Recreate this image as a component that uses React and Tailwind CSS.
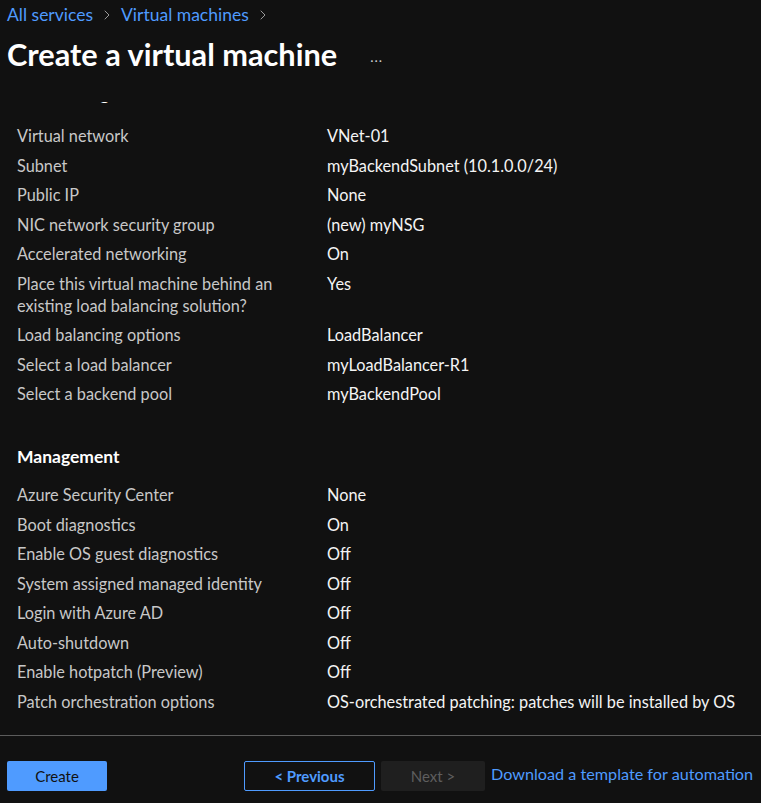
import { ChevronRight } from 'lucide-react';

const networking = [
  ['Virtual network', 'VNet-01'],
  ['Subnet', 'myBackendSubnet (10.1.0.0/24)'],
  ['Public IP', 'None'],
  ['NIC network security group', '(new) myNSG'],
  ['Accelerated networking', 'On'],
  ['Place this virtual machine behind an existing load balancing solution?', 'Yes'],
  ['Load balancing options', 'LoadBalancer'],
  ['Select a load balancer', 'myLoadBalancer-R1'],
  ['Select a backend pool', 'myBackendPool'],
];

const management = [
  ['Azure Security Center', 'None'],
  ['Boot diagnostics', 'On'],
  ['Enable OS guest diagnostics', 'Off'],
  ['System assigned managed identity', 'Off'],
  ['Login with Azure AD', 'Off'],
  ['Auto-shutdown', 'Off'],
  ['Enable hotpatch (Preview)', 'Off'],
  ['Patch orchestration options', 'OS-orchestrated patching: patches will be installed by OS'],
];

function SummaryRow({ label, value }) {
  return (
    <div className="flex leading-[22px]">
      <div className="w-[310px] shrink-0 pr-8 text-[#c8c8c8]">{label}</div>
      <div className="text-[#f4f4f4] whitespace-nowrap">{value}</div>
    </div>
  );
}

export default function App() {
  return (
    <div
      className="w-[761px] h-[803px] bg-[#111111] flex flex-col overflow-hidden text-[16.3px]"
      style={{ fontFamily: 'Lato, "Noto Sans", sans-serif' }}
    >
      {/* Header */}
      <div className="h-[102px] shrink-0 px-[7px] pt-[4px]">
        <div className="flex items-center leading-[22px] text-[17.5px] text-[#4f9bff]">
          <span>All services</span>
          <ChevronRight size={16} strokeWidth={1.5} className="mx-[6px] text-[#9a9a9a]" />
          <span>Virtual machines</span>
          <ChevronRight size={16} strokeWidth={1.5} className="mx-[6px] text-[#9a9a9a]" />
        </div>
        <div className="flex items-center mt-[11px] h-[36px]">
          <h1 className="text-[30.7px] font-bold text-white leading-[36px]">Create a virtual machine</h1>
          <span className="ml-[33px] text-[#d0d0d0] text-[14px] tracking-[1px] mt-[2px]">...</span>
        </div>
      </div>

      {/* Scrollable summary */}
      <div className="flex-1 overflow-hidden pl-[17px]">
        <div className="-mt-[19px]">
          <h2 className="text-[17.5px] font-bold text-white leading-[22px]">Networking</h2>
          <div className="mt-[20px] flex flex-col gap-[7.5px]">
            {networking.map(([l, v]) => (
              <SummaryRow key={l} label={l} value={v} />
            ))}
          </div>
          <h2 className="mt-[41px] text-[17.5px] font-bold text-white leading-[22px]">Management</h2>
          <div className="mt-[16px] flex flex-col gap-[7.5px]">
            {management.map(([l, v]) => (
              <SummaryRow key={l} label={l} value={v} />
            ))}
          </div>
        </div>
      </div>

      {/* Footer */}
      <div className="shrink-0 border-t border-[#5c5c5c] h-[68px] pt-[25px] px-[7px] flex items-start">
        <button className="w-[100px] h-[30px] rounded-[2px] bg-[#4f9bff] text-[#111111] text-[15px]">
          Create
        </button>
        <button className="ml-[137px] w-[131px] h-[30px] rounded-[2px] border border-[#4f9bff] text-[#4f9bff] font-bold text-[15px]">
          &lt; Previous
        </button>
        <button className="ml-[6px] w-[104px] h-[30px] rounded-[2px] bg-[#1f1f1f] text-[#5e5e5e] text-[15px]">
          Next &gt;
        </button>
        <a className="ml-[6px] text-[#4f9bff] text-[16.2px] leading-[26px] whitespace-nowrap">
          Download a template for automation
        </a>
      </div>
    </div>
  );
}
